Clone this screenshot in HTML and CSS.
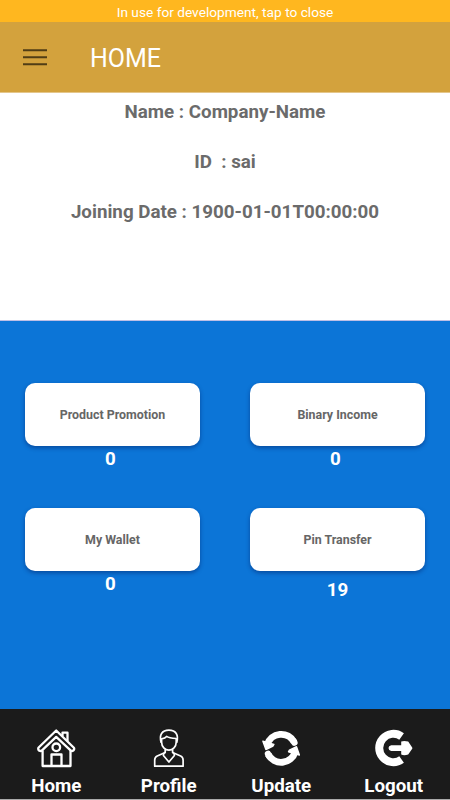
FILE: index.html
```html
<!DOCTYPE html>
<html lang="en">
<head>
<meta charset="utf-8">
<title>Home</title>
<link rel="stylesheet" href="styles.css">
</head>
<body>
<div class="app">
  <div class="banner">In use for development, tap to close</div>
  <header class="toolbar">
    <svg class="menu" viewBox="0 0 24 17"><path d="M0 1.3h24M0 8.3h24M0 15.3h24"/></svg>
    <h1>HOME</h1>
  </header>
  <section class="info">
    <p>Name : Company-Name</p>
    <p>ID&nbsp; : sai</p>
    <p>Joining Date : 1900-01-01T00:00:00</p>
  </section>
  <main class="grid">
    <div class="item"><div class="card">Product Promotion</div><div class="value">0</div></div>
    <div class="item"><div class="card">Binary Income</div><div class="value">0</div></div>
    <div class="item"><div class="card">My Wallet</div><div class="value">0</div></div>
    <div class="item"><div class="card">Pin Transfer</div><div class="value low">19</div></div>
  </main>
  <nav class="tabs">
    <a class="tab">
      <svg viewBox="0 0 40 40" fill="none" stroke="#fff" stroke-width="2.3" stroke-linejoin="round">
        <path d="M20.2 2.5 2.4 19.8Q1.8 21.8 3.3 22.8Q5 23.5 6.3 22.1L20.2 8.9 34.3 22.1Q35.8 23.5 37.3 22.6Q38.7 21.4 37.9 19.8Z"/>
        <path d="M6.6 22.5V38H34.5V22.5M15.5 38V26.5H25.5V38M26.5 8V4.7H31.5V13.3"/>
        <circle cx="20.3" cy="19.3" r="3.8"/>
      </svg>
      <span>Home</span>
    </a>
    <a class="tab">
      <svg viewBox="0 0 40 40" fill="none" stroke="#fff" stroke-width="1.7" stroke-linejoin="round">
        <path d="M12.2 14.8C9.8 7 13 2.2 19.9 2.2S30 7 27.7 14.8"/>
        <path d="M12.6 10.8C15 10.5 16.6 9.8 17.6 8.4C19.8 10 23.5 10.3 27.2 10.5V14.2C27.2 18.5 23.8 22.2 19.9 22.2S12.6 18.5 12.6 14.2Z"/>
        <path d="M16.2 21.2V24.5L8.2 28Q5.7 29.3 5.7 32V38.2H34.1V32Q34.1 29.3 31.6 28L23.6 24.5V21.2"/>
        <path d="M16.2 24.2Q14.2 25.2 14.4 27.5L19.9 34 25.4 27.5Q25.6 25.2 23.6 24.2"/>
      </svg>
      <span>Profile</span>
    </a>
    <a class="tab">
      <svg viewBox="0 0 40 40" fill="none" stroke="#fff">
        <path d="M6.2 16.8A14.6 14.6 0 0 1 33.2 14.2M34.2 23.8A14.6 14.6 0 0 1 7.2 26.4" stroke-width="6.8"/>
        <path d="M32.6 13 33.4 14.7M7.8 27.6 7 25.9" stroke-width="6.4" stroke-linecap="round"/>
        <path d="M1.9 13.2 12.9 16.4 12 18 4.9 21.5ZM38.4 27 27.5 23.8 28.4 22.2 35.5 18.7Z" fill="#fff" stroke-width="1.4" stroke-linejoin="round"/>
      </svg>
      <span>Update</span>
    </a>
    <a class="tab">
      <svg viewBox="0 0 40 40" fill="none" stroke="#fff">
        <path d="M27.6 8.4A14.2 14.2 0 1 0 27.6 31.6" stroke-width="8"/>
        <path d="M17.2 17.2H27.2V13.6Q30 12.5 34.2 13.6L38.2 19.4Q38.6 20.1 38.2 20.8L34.2 26.5Q30 27.8 27.2 26.5V23H17.2Q14.5 22.5 14.5 20.1T17.2 17.2Z" fill="#fff" stroke="none"/>
      </svg>
      <span>Logout</span>
    </a>
  </nav>
</div>
</body>
</html>
```
FILE: styles.css
```css
* { box-sizing: border-box; }
body { margin: 0; font-family: Roboto, sans-serif; background: #fff; }
.app { display: flex; flex-direction: column; width: 450px; height: 800px; overflow: hidden; }
.banner { height: 22px; line-height: 24px; background: #ffb71f; color: #fff; text-align: center; font-size: 13.7px; }
.toolbar { height: 71px; display: flex; align-items: center; padding-left: 23px; background: #d3a23d; border-bottom: 1px solid #e4c68b; }
.menu { width: 24px; height: 17px; fill: none; stroke: #503d15; stroke-width: 2; }
.toolbar h1 { margin: 3px 0 0 43px; color: #fff; font-size: 25px; font-weight: 400; line-height: 30px; }
.info { height: 228px; padding-top: 7px; text-align: center; color: #6b6b6b; font-size: 18.75px; font-weight: 700; border-bottom: 1px solid #bfc0e6; }
.info p { margin: 0 0 26px; line-height: 24px; }
.grid { height: 388px; padding: 62px 25px 0; display: grid; grid-template-columns: 175px 175px; grid-template-rows: 125px 125px; column-gap: 50px; align-content: start; background: #0c75d7; }
.card { height: 62.5px; display: flex; align-items: center; justify-content: center; border-radius: 10px; background: #fff; color: #666; font-size: 12.4px; font-weight: 700; box-shadow: 0 2px 4px rgba(0, 25, 90, .45); }
.value { margin-top: 1px; padding-right: 4px; line-height: 24px; text-align: center; color: #fff; font-size: 18.75px; font-weight: 700; }
.value.low { margin-top: 7px; padding: 0; }
.tabs { height: 91px; padding-top: 19px; display: grid; grid-template-columns: repeat(4, 1fr); background: #1b1b1b; border-bottom: 1px solid #aaa; }
.tab { display: flex; flex-direction: column; align-items: center; color: #fff; font-size: 18.75px; font-weight: 700; line-height: 24px; }
.tab svg { width: 40px; height: 40px; flex: none; }
.tab span { margin-top: 6px; }
```
